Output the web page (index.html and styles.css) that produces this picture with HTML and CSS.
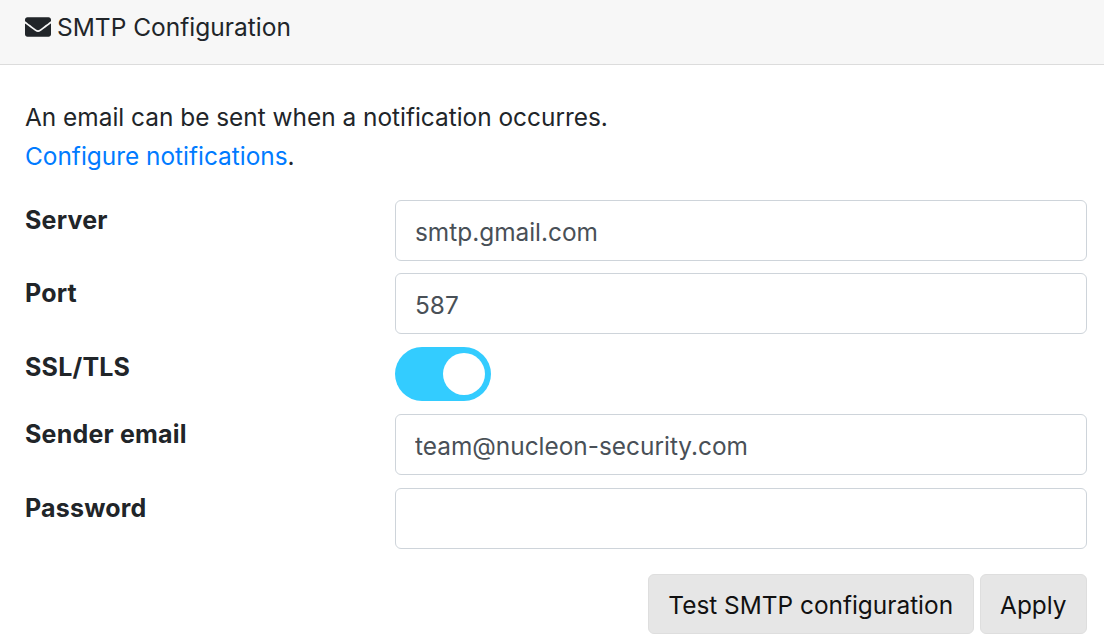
FILE: index.html
```html
<!DOCTYPE html>
<html lang="en">
<head>
    <meta charset="UTF-8" />
    <title>SMTP Configuration</title>
    <link rel="stylesheet" href="styles.css">
</head>
<body>

<div class="card">
    <div class="card-header">
        <svg class="icon" viewBox="0 0 512 512" width="26" height="26" aria-hidden="true">
            <path fill="#212529" d="M502.3 190.8c3.9-3.1 9.7-.2 9.7 4.7V400c0 26.5-21.5 48-48 48H48c-26.500 0-48-21.500-48-48V195.600c0-5 5.700-7.800 9.700-4.700 22.400 17.400 52.100 39.500 154.100 113.600 21.100 15.400 56.700 47.800 92.200 47.600 35.700.3 72-32.800 92.300-47.600 102-74.100 131.600-96.300 154-113.700zM256 320c23.200.4 56.600-29.200 73.400-41.400 132.700-96.300 142.800-104.700 173.400-128.700 5.800-4.500 9.200-11.500 9.200-18.900v-19c0-26.500-21.500-48-48-48H48C21.500 64 0 85.500 0 112v19c0 7.400 3.400 14.300 9.200 18.900 30.600 23.900 40.700 32.400 173.400 128.700 16.800 12.200 50.200 41.800 73.400 41.400z"/>
        </svg>
        SMTP Configuration
    </div>

    <div class="card-body">
        <p class="intro">
            An email can be sent when a notification occurres.<br>
            <a href="#">Configure notifications</a>.
        </p>

        <div class="form-row first-row">
            <label>Server</label>
            <input type="text" value="smtp.gmail.com">
        </div>
        <div class="form-row">
            <label>Port</label>
            <input type="text" value="587">
        </div>
        <div class="form-row">
            <label>SSL/TLS</label>
            <span class="switch"><span class="knob"></span></span>
        </div>
        <div class="form-row">
            <label>Sender email</label>
            <input type="text" value="team@nucleon-security.com">
        </div>
        <div class="form-row">
            <label>Password</label>
            <input type="password">
        </div>

        <div class="actions">
            <button>Test SMTP configuration</button>
            <button>Apply</button>
        </div>
    </div>
</div>

</body>
</html>
```

FILE: styles.css
```css
* { box-sizing: border-box; margin: 0; padding: 0; }
body {
    font-family: Inter, "Liberation Sans", sans-serif;
    font-size: 24.4px;
    color: #212529;
    background-color: #fff;
}
.card-header {
    display: flex;
    align-items: center;
    gap: 6px;
    height: 65px;
    padding: 0 25px 10px;
    font-size: 24.5px;
    background-color: #f7f7f7;
    border-bottom: 1px solid #dcdcdc;
}
.icon { flex: none; }
.card-body {
    padding: 33px 17px 0 25px;
}
.intro {
    line-height: 39px;
    margin-bottom: 24px;
}
.intro a {
    color: #007bff;
    text-decoration: none;
}
.form-row {
    display: flex;
    margin-bottom: 13px;
}
.first-row { margin-bottom: 12px; }
.form-row label {
    width: 370px;
    flex: none;
    font-size: 25px;
    font-weight: 700;
    letter-spacing: .2px;
    line-height: 41px;
}
.form-row input {
    flex: 1;
    height: 61px;
    padding: 2px 19px 0;
    font: inherit;
    color: #495057;
    border: 1px solid #ced4da;
    border-radius: 6px;
}
.switch {
    display: flex;
    justify-content: flex-end;
    align-items: center;
    width: 96px;
    height: 54px;
    padding-right: 6px;
    border-radius: 27px;
    background-color: #33ccff;
}
.knob {
    width: 42px;
    height: 42px;
    border-radius: 50%;
    background-color: #fff;
}
.actions {
    display: flex;
    justify-content: flex-end;
    gap: 6px;
    margin-top: 25px;
}
.actions button {
    height: 60px;
    padding: 2px 19.5px 0;
    font: inherit;
    color: #111;
    background-color: #e6e6e6;
    border: 1px solid #dedede;
    border-radius: 6px;
}
```
